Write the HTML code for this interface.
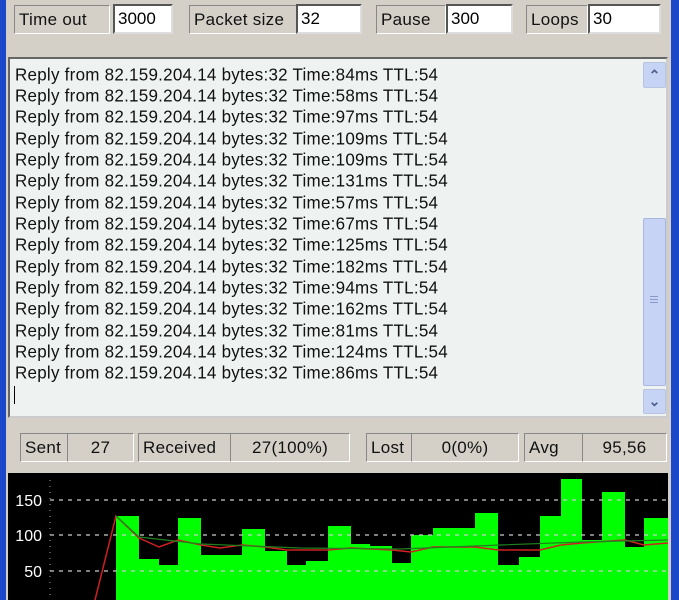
<!DOCTYPE html>
<html><head><style>
*{margin:0;padding:0;box-sizing:border-box}
body{width:679px;height:600px;overflow:hidden;background:#d4d0c8;position:relative;font-family:"Liberation Sans",Arial,sans-serif}
.a{position:absolute}
.lbl{position:absolute;border:1px solid #888;border-right-color:#fff;border-bottom-color:#fff;background:#d4d0c8;font-size:17px;color:#111;padding:4px 4px;height:29px;line-height:20px;white-space:nowrap;letter-spacing:0.3px}
.inp{position:absolute;background:#fff;border:2px solid #555;border-right-color:#ddd;border-bottom-color:#ddd;font-size:17px;padding:3px 3px;height:30px;line-height:20px}
.ta{left:8px;top:57px;width:660px;height:361px;background:#eef3f1;border:2px solid #666;border-right-color:#ccc;border-bottom-color:#ccc}
.ln{position:absolute;left:5px;font-size:17px;letter-spacing:0.25px;transform:scaleY(1.05);color:#111;white-space:nowrap;line-height:21px}
</style></head><body>
<div class="a" style="left:0;top:0;width:6px;height:600px;background:#1a48c8"></div>
<div class="a" style="left:671px;top:0;width:8px;height:600px;background:#1a48c8"></div>

<div class="lbl" style="left:14px;top:5px;width:96px">Time out</div>
<div class="inp" style="left:113px;top:4px;width:60px">3000</div>
<div class="lbl" style="left:189px;top:5px;width:108px">Packet size</div>
<div class="inp" style="left:296px;top:4px;width:66px">32</div>
<div class="lbl" style="left:376px;top:5px;width:70px">Pause</div>
<div class="inp" style="left:446px;top:4px;width:67px">300</div>
<div class="lbl" style="left:526px;top:5px;width:62px">Loops</div>
<div class="inp" style="left:588px;top:4px;width:73px">30</div>

<div class="a ta">
<div class="ln" style="top:5px">Reply from 82.159.204.14 bytes:32 Time:84ms TTL:54</div>
<div class="ln" style="top:26px">Reply from 82.159.204.14 bytes:32 Time:58ms TTL:54</div>
<div class="ln" style="top:47px">Reply from 82.159.204.14 bytes:32 Time:97ms TTL:54</div>
<div class="ln" style="top:69px">Reply from 82.159.204.14 bytes:32 Time:109ms TTL:54</div>
<div class="ln" style="top:90px">Reply from 82.159.204.14 bytes:32 Time:109ms TTL:54</div>
<div class="ln" style="top:111px">Reply from 82.159.204.14 bytes:32 Time:131ms TTL:54</div>
<div class="ln" style="top:133px">Reply from 82.159.204.14 bytes:32 Time:57ms TTL:54</div>
<div class="ln" style="top:154px">Reply from 82.159.204.14 bytes:32 Time:67ms TTL:54</div>
<div class="ln" style="top:175px">Reply from 82.159.204.14 bytes:32 Time:125ms TTL:54</div>
<div class="ln" style="top:197px">Reply from 82.159.204.14 bytes:32 Time:182ms TTL:54</div>
<div class="ln" style="top:218px">Reply from 82.159.204.14 bytes:32 Time:94ms TTL:54</div>
<div class="ln" style="top:239px">Reply from 82.159.204.14 bytes:32 Time:162ms TTL:54</div>
<div class="ln" style="top:261px">Reply from 82.159.204.14 bytes:32 Time:81ms TTL:54</div>
<div class="ln" style="top:282px">Reply from 82.159.204.14 bytes:32 Time:124ms TTL:54</div>
<div class="ln" style="top:303px">Reply from 82.159.204.14 bytes:32 Time:86ms TTL:54</div>
<div class="a" style="left:4px;top:327px;width:1px;height:18px;background:#000"></div>
<div class="a" style="left:633px;top:3px;width:23px;height:26px;background:#c6d3f5;border:1px solid #b8c4e0;border-radius:2px;text-align:center;color:#4d5f8a;font-size:14px;line-height:24px;font-weight:bold">&#8963;</div>
<div class="a" style="left:633px;top:159px;width:23px;height:168px;background:#c6d3f5;border:1px solid #a8b8e0;border-radius:2px"></div>
<div class="a" style="left:640px;top:237px;width:8px;height:1px;background:#8898c8;box-shadow:0 3px #8898c8,0 6px #8898c8"></div>
<div class="a" style="left:633px;top:330px;width:23px;height:25px;background:#c6d3f5;border:1px solid #b8c4e0;border-radius:2px;text-align:center;color:#4d5f8a;font-size:14px;line-height:22px;font-weight:bold">&#8964;</div>
</div>

<div class="lbl" style="left:20px;top:433px;width:48px">Sent</div>
<div class="lbl" style="left:67px;top:433px;width:67px;text-align:center">27</div>
<div class="lbl" style="left:138px;top:433px;width:93px">Received</div>
<div class="lbl" style="left:230px;top:433px;width:120px;text-align:center">27(100%)</div>
<div class="lbl" style="left:366px;top:433px;width:46px">Lost</div>
<div class="lbl" style="left:411px;top:433px;width:108px;text-align:center">0(0%)</div>
<div class="lbl" style="left:524px;top:433px;width:59px">Avg</div>
<div class="lbl" style="left:582px;top:433px;width:85px;text-align:center">95,56</div>

<svg class="a" style="left:8px;top:473px" width="660" height="127" viewBox="8 473 660 127">
<rect x="8" y="473" width="660" height="127" fill="#000"/>
<g fill="#00ff00">
<rect x="116" y="516" width="23" height="90"/>
<rect x="139" y="559" width="20" height="50"/>
<rect x="159" y="565" width="19" height="50"/>
<rect x="178" y="518" width="23" height="90"/>
<rect x="201" y="555" width="41" height="50"/>
<rect x="242" y="529" width="23" height="80"/>
<rect x="265" y="551" width="22" height="60"/>
<rect x="287" y="565" width="19" height="50"/>
<rect x="306" y="561" width="22" height="50"/>
<rect x="328" y="526" width="23" height="80"/>
<rect x="351" y="544" width="19" height="60"/>
<rect x="370" y="546" width="22" height="60"/>
<rect x="392" y="563" width="19" height="50"/>
<rect x="411" y="535" width="22" height="70"/>
<rect x="433" y="528" width="42" height="80"/>
<rect x="475" y="513" width="23" height="90"/>
<rect x="498" y="565" width="21" height="50"/>
<rect x="519" y="557" width="21" height="50"/>
<rect x="540" y="516" width="21" height="90"/>
<rect x="561" y="479" width="21" height="130"/>
<rect x="582" y="540" width="20" height="70"/>
<rect x="602" y="492" width="23" height="110"/>
<rect x="625" y="547" width="19" height="60"/>
<rect x="644" y="518" width="24" height="90"/>
</g>
<g stroke="#ccc" stroke-dasharray="4,5" stroke-width="1.2">
<line x1="50" y1="500" x2="668" y2="500"/>
<line x1="50" y1="535" x2="668" y2="535"/>
<line x1="50" y1="571" x2="668" y2="571"/>
</g>
<line x1="50" y1="480" x2="50" y2="600" stroke="#aaa" stroke-dasharray="1,5"/>
<polyline fill="none" stroke="#d02020" stroke-width="1.5" points="95,600 116,516 139,538 159,547 178,540 201,545 220,548 242,545 265,547 287,550 328,550 351,548 392,550 411,552 433,547 475,547 498,550 540,550 561,545 582,543 625,540 644,545 668,543"/>
<polyline fill="none" stroke="#208020" stroke-width="1.2" points="116,516 139,537 201,544 300,548 400,549 500,545 582,542 668,540"/>
<g fill="#fff" font-size="16" font-family="Liberation Sans,Arial,sans-serif" text-anchor="end">
<text x="42" y="506">150</text>
<text x="42" y="541">100</text>
<text x="42" y="577">50</text>
</g>
</svg>
</body></html>
